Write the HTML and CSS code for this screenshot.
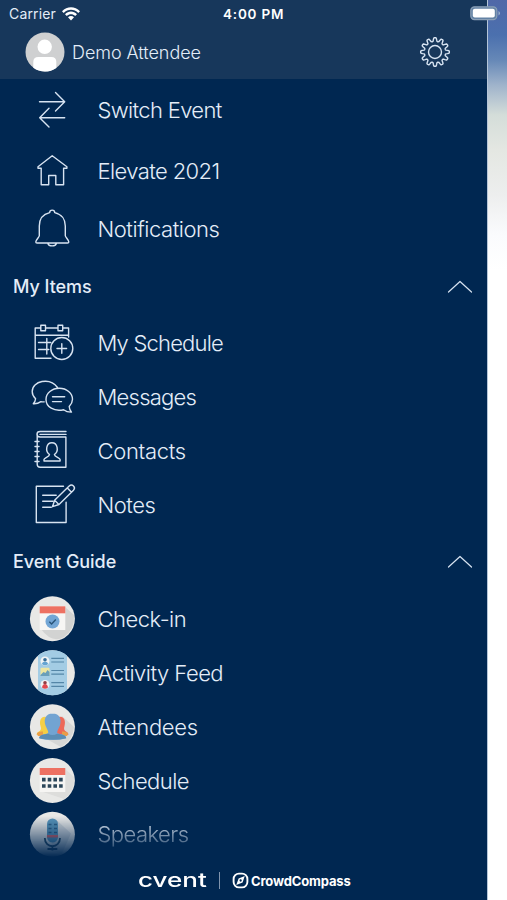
FILE: index.html
```html
<!DOCTYPE html>
<html lang="en">
<head>
<meta charset="utf-8">
<title>Event menu</title>
<link rel="stylesheet" href="styles.css">
</head>
<body>
<div class="app">
  <div class="drawer">
    <header class="top">
      <div class="status">
        <span class="carrier">Carrier</span>
        <svg class="wifi" width="18" height="14" viewBox="0 0 18 14"><path d="M0 4.200C5-1.200 13-1.200 18 4.200L16.300 6C12.200 1.700 5.800 1.700 1.700 6ZM3 7.200C6.400 3.700 11.600 3.700 15 7.200L13.200 9C10.800 6.600 7.200 6.600 4.800 9ZM6 10.200C7.700 8.500 10.300 8.500 12 10.200L9 13.400Z" fill="#fff"/></svg>
        <span class="time">4:00 PM</span>
      </div>
      <div class="profile">
        <svg class="avatar" width="40" height="40" viewBox="0 0 40 40"><circle cx="20" cy="20" r="19.500" fill="#cfd0d1"/><circle cx="19.700" cy="14.800" r="7.200" fill="#fff"/><path d="M8.300 35.700V30q0-5 5-5h13q5 0 5 5v5.900A19.500 19.500 0 0 1 8.300 35.700Z" fill="#fff"/></svg>
        <span class="name">Demo Attendee</span>
        <svg class="gear" width="32" height="32" viewBox="-16 -16 32 32"><circle r="6.500"/><path id="gear-edge"/></svg>
      </div>
    </header>
    <nav class="menu">
      <a class="row row-switch"><svg class="icon" viewBox="25 83 54 54"><path d="M39.500 101.700h25M55.500 92.500l9.200 9.200-9.200 9.200M64.700 117.700h-25M49 108.300l-9.300 9.400 9.300 9.300"/></svg><span class="label l-switch">Switch Event</span></a>
      <a class="row row-home"><svg class="icon" viewBox="25 144 54 54"><path d="M52.200 155.800 38 166.700v1.500h3.200v16.600h7.500v-9.300h7.100v9.300h7.800v-16.600h3.300v-1.500Z"/></svg><span class="label l-home">Elevate 2021</span></a>
      <a class="row row-bell"><svg class="icon" viewBox="25 202 54 54"><path d="M49.700 212.600c0-3.300 5-3.300 5 0 7 1.600 10.600 7 10.600 13.400v9.800c0 1.200 3.500 4.300 3.500 6.100 0 .8-.6 1.100-1.300 1.100H37c-.8 0-1.200-.4-1.200-1.100 0-1.800 3.500-4.900 3.500-6.100V226c0-6.400 3.400-11.800 10.400-13.400ZM47.800 243.200c1.100 3.600 7.500 3.600 8.700 0"/></svg><span class="label l-bell">Notifications</span></a>
      <div class="section s-items"><h2>My Items</h2><svg class="chev" viewBox="0 0 26 14"><path d="m1.500 12 11.500-10.500 11.500 10.500"/></svg></div>
      <a class="row"><svg class="icon" viewBox="25 316 54 54"><path d="M40.700 328H35.200v30.200H51M45.500 328h12.400M62.600 328h6v9M35.200 335.200h33.400M40.800 325.200h4.700v5.600h-4.700ZM58 325.200h4.700v5.600H58ZM38.500 342.500h12.300M38.500 349.500h10.300M46.800 338.500v15.500"/><circle cx="61.800" cy="348.500" r="11"/><path d="M57 348.500h9.600M61.800 343.700v9.600"/></svg><span class="label l-mysch">My Schedule</span></a>
      <a class="row"><svg class="icon" viewBox="25 370 54 54"><path d="M57.500 387.500C50 377 32 380.800 32.200 391.500c0 3.200 1.400 5.300 3.400 7.200-.2 2-1 3.600-2.300 5 3.200.2 5.500-.6 7.600-2.100q1.700.4 3.300.3M59.300 388.300c7.300 0 13.200 4.900 13.200 11 0 3.300-1.500 5.300-3.300 7.200.1 2.100.8 3.900 2.300 5.600-3.200.1-5.800-.8-7.900-2.400-9.500 2.200-17.600-2.700-17.600-10.300 0-6.200 6-11.100 13.300-11.100ZM52.500 396.700h12.200M52.500 401.600h9"/></svg><span class="label l-msg">Messages</span></a>
      <a class="row"><svg class="icon" viewBox="25 424 54 54"><path d="M66 431.500H40.200c-4.300 0-4.300 5.500 0 5.500h25.700v30.200H40.200c-2 0-3-1-3-3V434M40 434.400h26M35 441.500h4M35 446.500h4M35 451.500h4M35 456.500h4M35 461.500h4"/><path d="M44 461v-1.500c0-2 5.500-2.500 5.500-5-4.700-3.500-3.300-11.800 2.400-11.800s7.300 8.300 2.500 11.800c0 2.500 5.700 3 5.700 5v1.500Z"/></svg><span class="label l-con">Contacts</span></a>
      <a class="row"><svg class="icon" viewBox="25 478 54 54"><path d="M63.500 486.200H36.300v36.300h29.800v-20.200M42.700 495.200h13.500M42.700 501.200h10.500M42.700 507.200h8.600"/><path d="m52.500 506.700 2.100-6.400 14.600-14.300c3-2.800 7 1.400 4.300 4.200L59 504.500ZM54.600 500.300l4.300 4.100M67.300 488l4 4.100"/></svg><span class="label l-notes">Notes</span></a>
      <div class="section s-guide"><h2>Event Guide</h2><svg class="chev" viewBox="0 0 26 14"><path d="m1.500 12 11.500-10.500 11.500 10.500"/></svg></div>
      <a class="row"><svg class="icon pic" viewBox="25 592 54 54"><circle cx="52.400" cy="618.800" r="22.500" fill="#e8e8e6"/><path d="m65 607 9 8q1 14-10 22-12 7-23-8Z" fill="#d2d3d2"/><path d="M39.700 606h25.600v24H39.700Z" fill="#f7f6f4"/><path d="M39.700 606.300h25.600v7H39.700Z" fill="#ed7162"/><circle cx="52.500" cy="621.500" r="7" fill="#73a6d5"/><path d="m49.300 621.800 2.300 2.100 4.200-4.500" fill="none" stroke="#285479" stroke-width="1.400"/></svg><span class="label l-check">Check-in</span></a>
      <a class="row"><svg class="icon pic" viewBox="25 646 54 54"><circle cx="52.400" cy="672.800" r="22.500" fill="#e8e8e6"/><path d="M38 655.600a22.500 22.500 0 0 1 29 0v34.400a22.500 22.500 0 0 1-29 0Z" fill="#a3cce4"/><circle cx="45" cy="661" r="4.500" fill="#f2f4f4"/><circle cx="45" cy="659.800" r="1.800" fill="#376f99"/><path d="M41.800 664q.5-2.600 3.200-2.600t3.200 2.600q-3 2.600-6.400 0" fill="#66a5d2"/><rect x="40.500" y="667.800" width="9" height="8" rx="1" fill="#eee6a1"/><path d="m40.500 675 3-3 2 1 2-3 2 2v4h-9Z" fill="#6a9fba"/><circle cx="45" cy="684.500" r="4.500" fill="#f2f4f4"/><circle cx="45" cy="682.700" r="1.800" fill="#913f46"/><path d="M42 687.500q.5-3.500 3-3.500t3 3.500q-3 2.500-6 0" fill="#df4a50"/><path d="M51.300 658.300H64M51.300 662H64M51.300 670.500H64M51.300 674.200H64M51.300 682.700H64M51.300 686.300H64" stroke="#5486a7" stroke-width="1.200"/></svg><span class="label l-feed">Activity Feed</span></a>
      <a class="row"><svg class="icon pic" viewBox="25 700 54 54"><circle cx="52.400" cy="726.800" r="22.500" fill="#e8e8e6"/><path d="m62 716 12 11q-1 13-13 20l-20-11Z" fill="#d6d7d6"/><path d="M46 717c-5-1-7 4-5.500 9 1 3 .5 4.500-2 5.700q-2 1-2 3H53V717Z" fill="#f5cf45"/><path d="M59 717c5-1 7 4 5.500 9-1 3-.5 4.500 2 5.700q2 1 2 3H52V717Z" fill="#ed6858"/><path d="M37 733q2-2 6-1.500V736h-5q-1-1-1-3Zm31 0q-2-2-6-1.500V736h5q1-1 1-3Z" fill="#e99e49"/><path d="M52.500 713.500c-7 0-9 6-7 12 1 3 3 5 2.700 7.500-3 1.500-9 1.500-9 5.200 6 2 20 2 27 0 0-3.700-6-3.700-9-5.200-.3-2.500 1.700-4.500 2.700-7.500 2-6 0-12-7.400-12Z" fill="#72a4d2"/><path d="M39.200 738.200c0-3.500 5-3.700 9-4.500q4.200 2.500 9 0c4 .8 9 1 9 4.500q-13 3-27 0Z" fill="#5b8db5"/></svg><span class="label l-att">Attendees</span></a>
      <a class="row"><svg class="icon pic" viewBox="25 754 54 54"><circle cx="52.400" cy="780.500" r="22.500" fill="#e8e8e6"/><path d="m65 769 9 8q1 14-10 22l-24-8Z" fill="#dddddb"/><path d="M39.700 768h25.600v24H39.700Z" fill="#f6f5f3"/><path d="M39.700 768h25.600v7H39.700Z" fill="#ed7162"/><path d="M42 779.700h20.700M42 786h20.700" stroke="#2b4659" stroke-width="3.700" stroke-dasharray="3.600 2.100"/></svg><span class="label l-sched">Schedule</span></a>
      <a class="row row-last"><svg class="icon pic" viewBox="25 807.500 54 54"><circle cx="52.400" cy="833.800" r="22.500" fill="#e8e8e6"/><path d="m57 820 14 13-9 20-12-3Z" fill="#cfd4d8"/><path d="M44.800 837.500c0 11 15.200 11 15.200 0M52.400 846v4M47.500 848.500h9.800" fill="none" stroke="#294b64" stroke-width="1.800"/><rect x="47" y="818" width="11" height="24" rx="5.500" fill="#5793b8"/><path d="M48.500 824h3M48.500 828h3M48.500 832h3M54 824h3M54 828h3M54 832h3" stroke="#2d6086" stroke-width="1.500"/><path d="M47 834.500h11v2.500H47Z" fill="#da6469"/></svg><span class="label l-speak">Speakers</span></a>
    </nav>
    <footer class="brands">
      <span class="cvent">cvent</span><span class="divider"></span>
      <svg class="compass" viewBox="0 0 18 18"><rect x="1.700" y="1.700" width="14.600" height="14.600" rx="5.700" fill="none" stroke="#fff" stroke-width="2"/><path fill-rule="evenodd" d="m13.500 4.300-2.300 6.700-6.700 2.700L7 7Zm-4.400 3.500a1.200 1.200 0 1 0 .1 2.400 1.200 1.200 0 0 0-.1-2.400Z" fill="#fff"/></svg>
      <span class="crowd">CrowdCompass</span>
    </footer>
  </div>
  <div class="behind"></div>
  <svg class="battery" width="31" height="15" viewBox="0 0 31 15"><rect x=".8" y=".8" width="26" height="12.800" rx="3.600" fill="#6382a4" stroke="#8ba0b7" stroke-width="1.200"/><rect x="2.800" y="2.800" width="22" height="8.800" rx="2" fill="#fff"/><path d="M28.500 5v4.500q1.500-.7 1.500-2.250T28.500 5Z" fill="#9bb0ca"/></svg>
</div>
<script src="gear.js"></script>
</body>
</html>
```

FILE: styles.css
```css
* { box-sizing: border-box; }
body { margin: 0; font-family: Inter, "Liberation Sans", sans-serif; color: #e4edf8; background: #fff; }
.app { position: relative; display: flex; width: 507px; height: 900px; overflow: hidden; }
.drawer { width: 487px; height: 900px; background: #002751; display: flex; flex-direction: column; }
.behind { flex: 1; border-left: 1px solid #b5c5d8; background: linear-gradient(#5068a8 0, #4b70ae 35px, #6688b7 60px, #9fb3cb 85px, #d4ddd9 115px, #e4e7e2 150px, #edeeee 195px, #fafbfd 235px, #fff 270px); }
.top { height: 79px; background: #17375b; }
.status { height: 27px; display: flex; align-items: center; padding-left: 9px; position: relative; }
.carrier { width: 53px; font-size: 14px; letter-spacing: .15px; }
.time { position: absolute; left: 223px; top: 5px; font-size: 13.500px; line-height: 18px; font-weight: 600; letter-spacing: .8px; color: #fff; white-space: nowrap; }
.profile { display: flex; align-items: center; height: 50px; padding-left: 25px; }
.name { width: 354px; padding-left: 7px; font-size: 18px; font-weight: 300; letter-spacing: -.05px; }
.gear { overflow: visible; }
.gear, .icon:not(.pic), .chev { fill: none; stroke: #d7e3f1; stroke-width: 1.400; stroke-linecap: round; stroke-linejoin: round; }
.chev { stroke-width: 1.200; }
.menu { height: 783px; }
.row { display: flex; align-items: center; height: 54px; padding-left: 25px; }
.row-switch { height: 62px; }
.row-home { height: 60px; }
.row-bell { height: 56px; }
.icon { width: 54px; height: 54px; flex: none; }
.label { margin-left: 18.500px; padding-bottom: 1px; font-size: 22px; font-weight: 300; line-height: 30px; white-space: nowrap; }
.l-switch { letter-spacing: -.65px; }
.l-home { letter-spacing: -.6px; }
.l-bell { letter-spacing: -.45px; }
.l-mysch { letter-spacing: -.8px; }
.l-msg { letter-spacing: -.75px; }
.l-con { letter-spacing: -.3px; }
.l-notes { letter-spacing: -.5px; }
.l-check { letter-spacing: -.5px; }
.l-feed { letter-spacing: -.52px; }
.l-att { letter-spacing: -.25px; }
.l-sched { letter-spacing: -.58px; }
.l-speak { letter-spacing: -.55px; }
.section { height: 59px; display: flex; align-items: center; justify-content: space-between; padding: 0 14px 0 13px; }
.s-guide { height: 60px; }
h2 { margin: 0; font-size: 18px; line-height: 24px; font-weight: 500; letter-spacing: -.05px; }
.chev { width: 26px; height: 14px; }
.row-last { height: 53px; -webkit-mask-image: linear-gradient(#000 0, #000 15%, transparent 93%); mask-image: linear-gradient(#000 0, #000 15%, transparent 93%); }
.brands { height: 38px; display: flex; align-items: center; padding: 0 0 1px 138px; color: #fff; }
.cvent { width: 81px; font-size: 19px; line-height: 20px; font-weight: 500; transform: scaleX(1.370); transform-origin: left; }
.divider { width: 1px; height: 17px; background: #8094ad; margin-right: 12px; }
.compass { width: 17px; height: 17px; margin-right: 2px; }
.crowd { font-size: 13px; font-weight: 700; letter-spacing: -.15px; }
.battery { position: absolute; left: 470px; top: 6px; }
```

FILE: gear.js
```js
// Twelve rounded teeth around the hub.
const points = [];
for (let i = 0; i < 144; i++) {
  const a = i * Math.PI / 72;
  const wave = Math.cos(a * 12);
  const r = 12.5 + 1.9 * Math.tanh(wave * 2.2);
  points.push((r * Math.sin(a)).toFixed(2) + " " + (-r * Math.cos(a)).toFixed(2));
}
document.getElementById("gear-edge").setAttribute("d", "M" + points.join("L") + "Z");
```
